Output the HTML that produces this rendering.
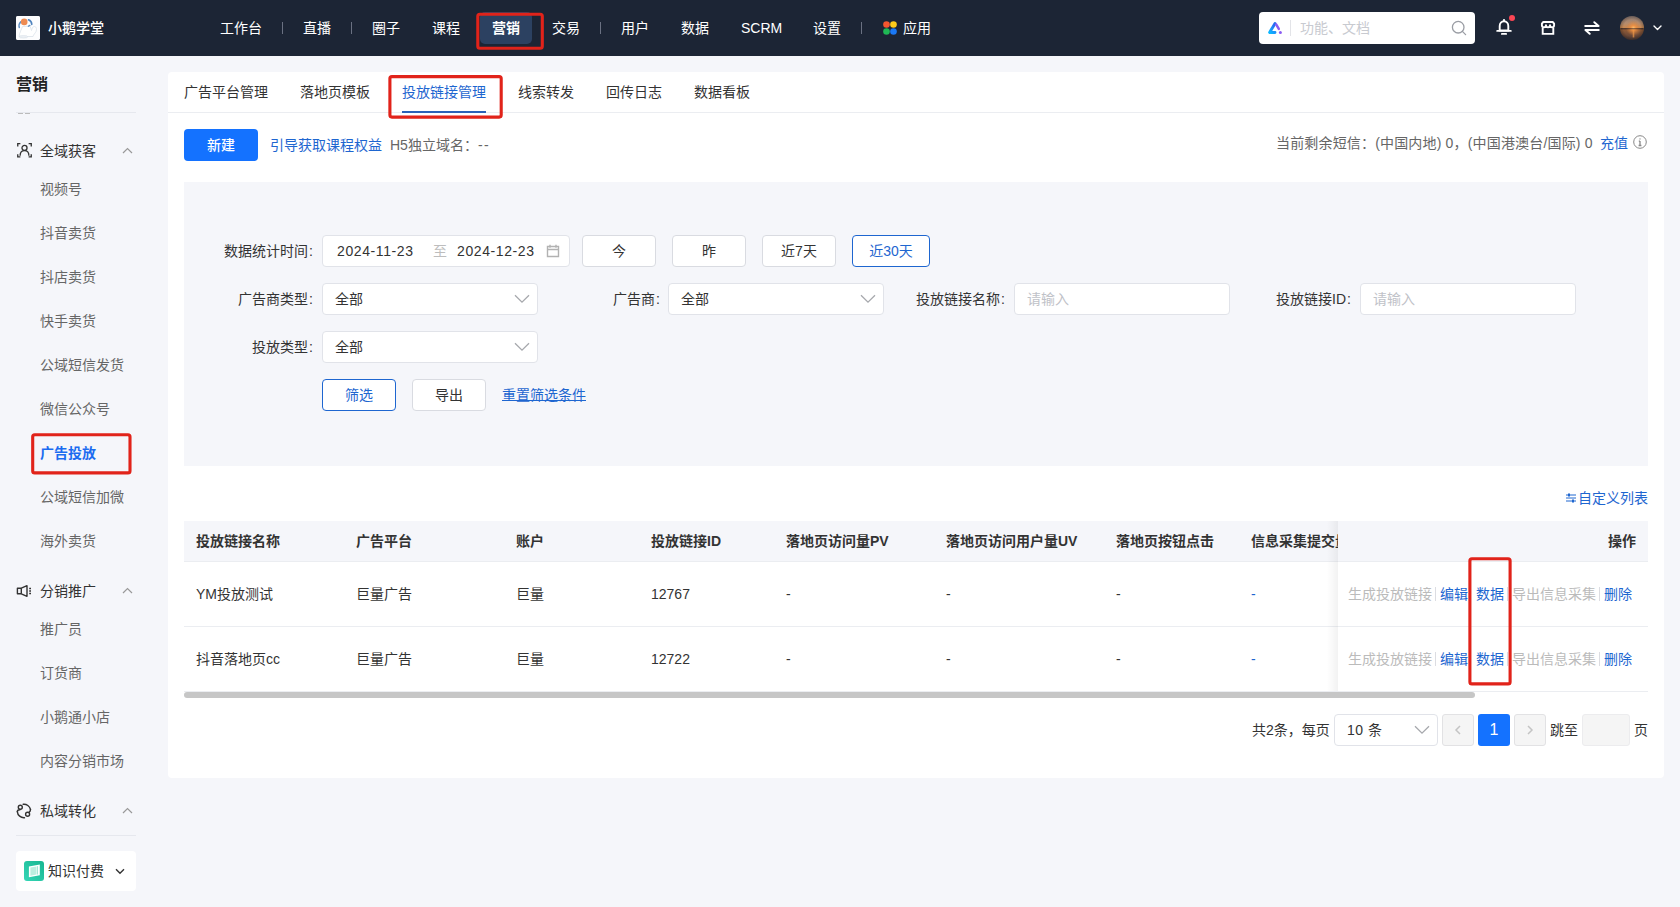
<!DOCTYPE html>
<html lang="zh-CN">
<head>
<meta charset="utf-8">
<title>投放链接管理</title>
<style>
*{box-sizing:border-box;margin:0;padding:0}
html,body{width:1680px;height:907px;overflow:hidden}
body{font-family:"Liberation Sans","Noto Sans CJK SC",sans-serif;font-size:14px;color:#333;background:#f5f6fa;position:relative}
.abs{position:absolute;white-space:nowrap}
/* top bar */
#top{position:absolute;left:0;top:0;width:1680px;height:56px;background:#1c2535}
#top .nav{position:absolute;top:0;height:56px;line-height:56px;color:#fff;font-size:14px;white-space:nowrap}
#top .sep{position:absolute;top:22px;width:1px;height:12px;background:#6a7182}
#logo{position:absolute;left:16px;top:16px;width:24px;height:24px;border-radius:2px;background:#f2f4f6;overflow:hidden}
/* sidebar */
#side{position:absolute;left:0;top:56px;width:168px;height:851px;background:#f5f6fa}
#side .it{position:absolute;left:40px;font-size:14px;color:#666;white-space:nowrap;line-height:20px}
#side .grp{position:absolute;left:40px;font-size:14px;color:#333;white-space:nowrap;line-height:20px}
/* main */
#main{position:absolute;left:168px;top:72px;width:1496px;height:706px;background:#fff;border-radius:4px}
.tab{position:absolute;top:82px;font-size:14px;line-height:20px;color:#333;white-space:nowrap}
.redbox{position:absolute;border:2px solid #f5222d;border-radius:3px}
.lbl{position:absolute;font-size:14px;line-height:20px;color:#333;white-space:nowrap;text-align:right}
.inp{position:absolute;height:32px;background:#fff;border:1px solid #e1e3e9;border-radius:4px;font-size:14px;line-height:30px;color:#333;white-space:nowrap}
.btn{position:absolute;height:32px;background:#fff;border:1px solid #d9dbe1;border-radius:4px;font-size:14px;line-height:30px;color:#333;text-align:center;white-space:nowrap}
.blue{color:#1e66d0 !important}
.th{position:absolute;top:531px;font-size:14px;line-height:20px;font-weight:bold;color:#333;white-space:nowrap}
.td{position:absolute;font-size:14px;line-height:20px;color:#333;white-space:nowrap}
</style>
</head>
<body>
<div id="top">
<div id="logo"><svg width="24" height="24" viewBox="0 0 24 24"><rect width="24" height="24" fill="#fdfdfe"/><path d="M6.500 10.500c-1 3-3 6-3.500 10h14c.5-2 2-3 3-5s.5-5-1.500-5-2.500 2-3 4l-1.500-4.500z" fill="#fff" stroke="#dfe5ec" stroke-width=".9"/><path d="M3.300 11.500c-.6-2 .2-4.500 1.500-5.800" fill="none" stroke="#5f8fc4" stroke-width="1.500" stroke-linecap="round"/><path d="M12.500 3.800c2 .8 3.200 2.600 3.300 4.600" fill="none" stroke="#4f83bd" stroke-width="1.600" stroke-linecap="round"/><path d="M12.300 10.300l1.600-.9" stroke="#5f8fc4" stroke-width="1.300" stroke-linecap="round"/><circle cx="8.200" cy="5.900" r="3.300" fill="#ee8b52"/><ellipse cx="7.500" cy="20.800" rx="4.200" ry="1.200" fill="#eef2f6" stroke="#d5dde6" stroke-width=".6"/></svg></div>
<div class="nav" style="left:48px;font-weight:500">小鹅学堂</div>
<div class="nav" style="left:220px">工作台</div><div class="sep" style="left:282px"></div>
<div class="nav" style="left:303px">直播</div><div class="sep" style="left:351px"></div>
<div class="nav" style="left:372px">圈子</div>
<div class="nav" style="left:432px">课程</div>
<div class="abs" style="left:480px;top:12px;width:52px;height:32px;background:#2c4161;border-radius:5px"></div>
<div class="nav" style="left:492px;font-weight:bold">营销</div>
<svg class="abs" style="left:475px;top:11px" width="71" height="41" viewBox="0 0 71 41"><rect x="2.80" y="3.30" width="64.50" height="34.00" rx="2" fill="none" stroke="#e1231a" stroke-width="3.1"/></svg>
<div class="nav" style="left:552px">交易</div><div class="sep" style="left:600px"></div>
<div class="nav" style="left:621px">用户</div>
<div class="nav" style="left:681px">数据</div>
<div class="nav" style="left:741px">SCRM</div>
<div class="nav" style="left:813px">设置</div><div class="sep" style="left:861px"></div>
<svg class="abs" style="left:883px;top:21px" width="14" height="14" viewBox="0 0 14 14"><circle cx="3.500" cy="3.500" r="3.300" fill="#f4562f"/><circle cx="10.500" cy="3.500" r="3.300" fill="#fccb1a"/><circle cx="3.500" cy="10.500" r="3.300" fill="#1fb855"/><circle cx="10.500" cy="10.500" r="3.300" fill="#1a78f5"/></svg>
<div class="nav" style="left:903px">应用</div>
<div class="abs" style="left:1259px;top:12px;width:216px;height:32px;background:#fff;border-radius:4px"></div>
<svg class="abs" style="left:1267px;top:21px" width="16" height="14" viewBox="0 0 16 14"><defs><linearGradient id="ag" x1="0" y1="1" x2=".6" y2="0"><stop offset="0" stop-color="#0cb8ff"/><stop offset="1" stop-color="#2a6af2"/></linearGradient></defs><path d="M8 2.400 2.600 11.500H8" fill="none" stroke="url(#ag)" stroke-width="2.900" stroke-linecap="round" stroke-linejoin="round"/><path d="M9.300 3.600l2.500 4.300" fill="none" stroke="#8b5cf2" stroke-width="2.500" stroke-linecap="round"/><circle cx="13.400" cy="11.500" r="1.500" fill="#8b5cf2"/></svg>
<div class="abs" style="left:1290px;top:20px;width:1px;height:16px;background:#e3e4e8"></div>
<div class="abs" style="left:1300px;top:0;line-height:56px;font-size:14px;color:#c8cad0">功能、文档</div>
<svg class="abs" style="left:1451px;top:20px" width="16" height="16" viewBox="0 0 16 16"><circle cx="7.2" cy="7.2" r="5.8" fill="none" stroke="#9a9da4" stroke-width="1.3"/><path d="M11.4 11.4 14.6 14.6" stroke="#9a9da4" stroke-width="1.3" stroke-linecap="round"/></svg>
<svg class="abs" style="left:1496px;top:19px" width="16" height="17" viewBox="0 0 16 17"><path d="M8 2.300c-2.500 0-4.300 1.900-4.300 4.600v4.600h8.600V6.900c0-2.700-1.800-4.600-4.300-4.600z" fill="none" stroke="#fff" stroke-width="1.900"/><path d="M1.200 11.900h13.600" stroke="#fff" stroke-width="1.900" stroke-linecap="round"/><path d="M5.800 14.900h4.400" stroke="#fff" stroke-width="1.700" stroke-linecap="round"/><path d="M8 .9v1.200" stroke="#fff" stroke-width="1.900" stroke-linecap="round"/></svg>
<div class="abs" style="left:1509px;top:15px;width:6px;height:6px;border-radius:3px;background:#fb4654"></div>
<svg class="abs" style="left:1540px;top:20px" width="16" height="16" viewBox="0 0 16 16"><path d="M2.700 7.800v6.100h10.600V7.800" fill="none" stroke="#fff" stroke-width="1.900"/><path d="M3.300 2h9.400l1.400 1.600v1.700a2.030 2.030 0 0 1-4.070 0 2.030 2.030 0 0 1-4.060 0 2.030 2.030 0 0 1-4.070 0V3.600z" fill="none" stroke="#fff" stroke-width="1.900" stroke-linejoin="round"/></svg>
<svg class="abs" style="left:1584px;top:21px" width="16" height="14" viewBox="0 0 16 14"><path d="M1.200 5h13.400L10.300 1.200" fill="none" stroke="#fff" stroke-width="1.900" stroke-linejoin="round" stroke-linecap="round"/><path d="M14.800 9H1.400l4.300 3.800" fill="none" stroke="#fff" stroke-width="1.900" stroke-linejoin="round" stroke-linecap="round"/></svg>
<svg class="abs" style="left:1620px;top:16px" width="24" height="24" viewBox="0 0 24 24"><defs><linearGradient id="av" x1="0" y1="0" x2="0" y2="1"><stop offset="0" stop-color="#8d7a74"/><stop offset=".3" stop-color="#b48c6e"/><stop offset=".5" stop-color="#c98850"/><stop offset=".53" stop-color="#4a342a"/><stop offset=".57" stop-color="#8e5a36"/><stop offset=".8" stop-color="#6e4a38"/><stop offset="1" stop-color="#4c3a36"/></linearGradient><radialGradient id="avg" cx=".56" cy=".5" r=".32"><stop offset="0" stop-color="#ffc070"/><stop offset=".35" stop-color="#f09040" stop-opacity=".85"/><stop offset="1" stop-color="#d08040" stop-opacity="0"/></radialGradient><radialGradient id="avv" cx=".5" cy=".5" r=".5"><stop offset=".7" stop-color="#000" stop-opacity="0"/><stop offset="1" stop-color="#000" stop-opacity=".25"/></radialGradient><clipPath id="avc"><circle cx="12" cy="12" r="12"/></clipPath></defs><g clip-path="url(#avc)"><rect width="24" height="24" fill="url(#av)"/><rect width="24" height="24" fill="url(#avg)"/><rect x="12.700" y="13.500" width="1.600" height="8" fill="#f09848" opacity=".7"/><rect x="1" y="12.300" width="22" height=".9" fill="#3a2a26" opacity=".8"/><rect width="24" height="24" fill="url(#avv)"/></g></svg>
<svg class="abs" style="left:1653px;top:25px" width="9" height="6" viewBox="0 0 9 6"><path d="M1 1l3.500 3.500L8 1" fill="none" stroke="#fff" stroke-width="1.400" stroke-linecap="round" stroke-linejoin="round"/></svg>
</div>
<div id="side">
<div class="abs" style="left:16px;top:17px;font-size:16px;line-height:24px;font-weight:bold;color:#222">营销</div>
<div class="abs" style="left:16px;top:56px;width:120px;height:1px;background:#e6e8ee"></div>
<div class="abs" style="left:18px;top:57px;width:5px;height:1px;background:#bbb"></div><div class="abs" style="left:25px;top:57px;width:5px;height:1px;background:#bbb"></div>
<div class="it" style="top:123px">视频号</div>
<div class="it" style="top:167px">抖音卖货</div>
<div class="it" style="top:211px">抖店卖货</div>
<div class="it" style="top:255px">快手卖货</div>
<div class="it" style="top:299px">公域短信发货</div>
<div class="it" style="top:343px">微信公众号</div>
<div class="it" style="top:431px">公域短信加微</div>
<div class="it" style="top:475px">海外卖货</div>
<div class="it" style="top:563px">推广员</div>
<div class="it" style="top:607px">订货商</div>
<div class="it" style="top:651px">小鹅通小店</div>
<div class="it" style="top:695px">内容分销市场</div>
<div class="it" style="top:387px;color:#1b6cf0;font-weight:bold">广告投放</div>
<svg class="abs" style="left:30px;top:376px" width="104" height="45" viewBox="0 0 104 45"><rect x="2.70" y="2.70" width="97.30" height="38.20" rx="2" fill="none" stroke="#e1231a" stroke-width="3.1"/></svg>
<svg class="abs" style="left:16.500px;top:87.400px" width="15" height="14.600" viewBox="0 0 16 16" preserveAspectRatio="none"><g fill="none" stroke="#333" stroke-width="1.400"><path d="M.8 3.800V.8h2.800"/><path d="M12.400.8h2.800v3"/><path d="M.8 12.200v3h2.800"/><path d="M15.200 12.200v3h-2.800"/><circle cx="8" cy="5.400" r="2.700"/><path d="M3.300 14c0-3.400 2-5.600 4.700-5.600s4.700 2.200 4.700 5.600"/></g></svg>
<div class="grp" style="top:85px">全域获客</div><svg class="abs" style="left:122px;top:91px" width="11" height="7" viewBox="0 0 11 7"><path d="M1 6l4.500-4.500L10 6" fill="none" stroke="#999" stroke-width="1.200"/></svg>
<svg class="abs" style="left:16px;top:528px" width="16" height="14" viewBox="0 0 16 14"><g fill="none" stroke="#333" stroke-width="1.400"><path d="M1.400 4.200h3.900L11 1.700v10.600L5.300 9.800H1.400z" stroke-linejoin="round"/><path d="M5.300 4.200v5.600"/><path d="M13.200 4.500h1.800M13.200 7h1.800M13.200 9.500h1.800"/></g></svg>
<div class="grp" style="top:525px">分销推广</div><svg class="abs" style="left:122px;top:531px" width="11" height="7" viewBox="0 0 11 7"><path d="M1 6l4.500-4.500L10 6" fill="none" stroke="#999" stroke-width="1.200"/></svg>
<svg class="abs" style="left:16px;top:747px" width="16" height="16" viewBox="0 0 16 16"><g fill="none" stroke="#333" stroke-width="1.400" stroke-linecap="round"><path d="M7.200 1.300A6.700 6.700 0 0 1 14.500 6.500"/><path d="M8.500 14.700A6.700 6.700 0 0 1 1.300 8.600"/><path d="M1.300 8.600c.2-1.400 1.400-1.800 2.700-1.800"/><path d="M14.500 6.500c0 1.400-.6 2.200-1.500 2.800"/><circle cx="4.300" cy="4.300" r="2"/><circle cx="11.600" cy="11.200" r="2"/></g></svg>
<div class="grp" style="top:745px">私域转化</div><svg class="abs" style="left:122px;top:751px" width="11" height="7" viewBox="0 0 11 7"><path d="M1 6l4.500-4.500L10 6" fill="none" stroke="#999" stroke-width="1.200"/></svg>
<div class="abs" style="left:16px;top:779px;width:120px;height:1px;background:#e6e8ee"></div>
<div class="abs" style="left:16px;top:795px;width:120px;height:40px;background:#fff;border-radius:4px"></div>
<svg class="abs" style="left:24px;top:805px" width="20" height="20" viewBox="0 0 20 20"><defs><linearGradient id="kg" x1="0" y1="1" x2="1" y2="0"><stop offset="0" stop-color="#35d6b6"/><stop offset="1" stop-color="#17b590"/></linearGradient></defs><rect width="20" height="20" rx="3" fill="url(#kg)"/><path d="M4.900 5.400 15.800 3.400V14.200L4.900 16.200z" fill="#fff"/><path d="M6.400 6.500 12.400 5.400V13.600L6.400 14.700z" fill="#bdeee0"/><path d="M13.400 5.200v8.300" stroke="#7fdcc4" stroke-width=".8"/></svg>
<div class="abs" style="left:48px;top:805px;font-size:14px;line-height:20px;color:#333">知识付费</div>
<svg class="abs" style="left:115px;top:812px" width="10" height="7" viewBox="0 0 10 7"><path d="M1 1.200l4 4 4-4" fill="none" stroke="#333" stroke-width="1.400"/></svg>
</div>
<div id="main"></div>
<div class="tab" style="left:184px">广告平台管理</div>
<div class="tab" style="left:300px">落地页模板</div>
<div class="tab blue" style="left:402px">投放链接管理</div>
<div class="tab" style="left:518px">线索转发</div>
<div class="tab" style="left:606px">回传日志</div>
<div class="tab" style="left:694px">数据看板</div>
<div class="abs" style="left:168px;top:112px;width:1496px;height:1px;background:#ebedf1"></div>
<div class="abs" style="left:402px;top:111px;width:84px;height:2px;background:#2b61b8"></div>
<svg class="abs" style="left:387px;top:74px" width="118" height="47" viewBox="0 0 118 47"><rect x="2.90" y="2.60" width="111.30" height="40.50" rx="2" fill="none" stroke="#e1231a" stroke-width="3.1"/></svg>
<div class="abs" style="left:184px;top:129px;width:74px;height:32px;background:#1472ff;border-radius:4px;color:#fff;text-align:center;line-height:32px;font-size:14px;font-weight:500">新建</div>
<div class="abs blue" style="left:270px;top:135px;line-height:20px">引导获取课程权益</div>
<div class="abs" style="left:390px;top:135px;line-height:20px;color:#666">H5独立域名：<span style="letter-spacing:1.5px">--</span></div>
<div class="abs" style="left:1276px;top:133px;line-height:20px;color:#666;letter-spacing:.17px">当前剩余短信：(中国内地) 0，(中国港澳台/国际) 0</div>
<div class="abs blue" style="left:1600px;top:133px;line-height:20px">充值</div>
<svg class="abs" style="left:1633px;top:135px" width="14" height="14" viewBox="0 0 14 14"><circle cx="7" cy="7" r="6.300" fill="none" stroke="#888" stroke-width="1"/><path d="M7 6v4.500M5.800 6.200H7M5.600 10.500h2.800" stroke="#888" stroke-width="1.300" fill="none"/><circle cx="7" cy="3.900" r=".7" fill="#888"/></svg>
<div class="abs" style="left:184px;top:182px;width:1464px;height:284px;background:#f5f6fa"></div>
<div class="lbl" style="right:1367px;top:241px">数据统计时间<span style="margin-left:1px">:</span></div>
<div class="inp" style="left:322px;top:235px;width:248px"></div>
<div class="abs" style="left:337px;top:241px;line-height:20px;color:#333;letter-spacing:.6px">2024-11-23</div><div class="abs" style="left:433px;top:241px;line-height:20px;color:#bdbdbd;font-size:14px">至</div><div class="abs" style="left:457px;top:241px;line-height:20px;color:#333;letter-spacing:.6px">2024-12-23</div>
<svg class="abs" style="left:546px;top:244px" width="14" height="14" viewBox="0 0 14 14"><path d="M1.500 2.500h11v10h-11zM1.500 5.500h11M4 .8v3M10 .8v3" fill="none" stroke="#b2b2b2" stroke-width="1.400"/></svg>
<div class="btn" style="left:582px;top:235px;width:74px">今</div>
<div class="btn" style="left:672px;top:235px;width:74px">昨</div>
<div class="btn" style="left:762px;top:235px;width:74px">近7天</div>
<div class="btn" style="left:852px;top:235px;width:78px;border-color:#1e66d0;color:#1e66d0">近30天</div>
<div class="lbl" style="right:1367px;top:289px">广告商类型<span style="margin-left:1px">:</span></div>
<div class="inp" style="left:322px;top:283px;width:216px;padding-left:12px">全部</div>
<svg class="abs" style="left:514px;top:294px" width="16" height="10" viewBox="0 0 16 10"><path d="M1 1.200l7 7 7-7" fill="none" stroke="#a6a8ad" stroke-width="1.300"/></svg>
<div class="lbl" style="right:1020px;top:289px">广告商<span style="margin-left:1px">:</span></div>
<div class="inp" style="left:668px;top:283px;width:216px;padding-left:12px">全部</div>
<svg class="abs" style="left:860px;top:294px" width="16" height="10" viewBox="0 0 16 10"><path d="M1 1.200l7 7 7-7" fill="none" stroke="#a6a8ad" stroke-width="1.300"/></svg>
<div class="lbl" style="right:675px;top:289px">投放链接名称<span style="margin-left:1px">:</span></div>
<div class="inp" style="left:1014px;top:283px;width:216px;padding-left:12px;color:#bfc2c8">请输入</div>
<div class="lbl" style="right:329px;top:289px">投放链接ID<span style="margin-left:1px">:</span></div>
<div class="inp" style="left:1360px;top:283px;width:216px;padding-left:12px;color:#bfc2c8">请输入</div>
<div class="lbl" style="right:1367px;top:337px">投放类型<span style="margin-left:1px">:</span></div>
<div class="inp" style="left:322px;top:331px;width:216px;padding-left:12px">全部</div>
<svg class="abs" style="left:514px;top:342px" width="16" height="10" viewBox="0 0 16 10"><path d="M1 1.200l7 7 7-7" fill="none" stroke="#a6a8ad" stroke-width="1.300"/></svg>
<div class="btn" style="left:322px;top:379px;width:74px;border-color:#1e66d0;color:#1e66d0">筛选</div>
<div class="btn" style="left:412px;top:379px;width:74px">导出</div>
<div class="abs blue" style="left:502px;top:385px;line-height:20px">重置筛选条件</div><div class="abs" style="left:502px;top:400px;width:84px;height:1px;background:#1e66d0"></div>
<svg class="abs" style="left:1566px;top:493px" width="10" height="10" viewBox="0 0 10 10"><path d="M0 2h10M0 5h10M0 8h10" stroke="#1e66d0" stroke-width="1"/><rect x="2" y=".5" width="2" height="3" fill="#1e66d0"/><rect x="6" y="6.500" width="2" height="3" fill="#1e66d0"/></svg>
<div class="abs blue" style="left:1578px;top:488px;line-height:20px">自定义列表</div>
<div class="abs" style="left:184px;top:521px;width:1464px;height:40px;background:#f5f6fa"></div>
<div class="th" style="left:196px">投放链接名称</div>
<div class="th" style="left:356px">广告平台</div>
<div class="th" style="left:516px">账户</div>
<div class="th" style="left:651px">投放链接ID</div>
<div class="th" style="left:786px">落地页访问量PV</div>
<div class="th" style="left:946px">落地页访问用户量UV</div>
<div class="th" style="left:1116px">落地页按钮点击</div>
<div class="th" style="left:1251px">信息采集提交量</div>
<div class="td" style="left:196px;top:584px">YM投放测试</div>
<div class="td" style="left:356px;top:584px">巨量广告</div>
<div class="td" style="left:516px;top:584px">巨量</div>
<div class="td" style="left:651px;top:584px">12767</div>
<div class="td" style="left:786px;top:584px">-</div>
<div class="td" style="left:946px;top:584px">-</div>
<div class="td" style="left:1116px;top:584px">-</div>
<div class="td blue" style="left:1251px;top:584px">-</div>
<div class="td" style="left:196px;top:649px">抖音落地页cc</div>
<div class="td" style="left:356px;top:649px">巨量广告</div>
<div class="td" style="left:516px;top:649px">巨量</div>
<div class="td" style="left:651px;top:649px">12722</div>
<div class="td" style="left:786px;top:649px">-</div>
<div class="td" style="left:946px;top:649px">-</div>
<div class="td" style="left:1116px;top:649px">-</div>
<div class="td blue" style="left:1251px;top:649px">-</div>
<div class="abs" style="left:184px;top:561px;width:1464px;height:1px;background:#ebedf1"></div>
<div class="abs" style="left:184px;top:626px;width:1464px;height:1px;background:#ebedf1"></div>
<div class="abs" style="left:184px;top:691px;width:1464px;height:1px;background:#ebedf1"></div>
<div class="abs" style="left:1327px;top:521px;width:11px;height:170px;background:linear-gradient(to right,rgba(0,0,0,0),rgba(0,0,0,.05))"></div>
<div class="abs" style="left:1338px;top:521px;width:310px;height:40px;background:#f5f6fa"></div>
<div class="abs" style="left:1338px;top:562px;width:310px;height:64px;background:#fff"></div>
<div class="abs" style="left:1338px;top:627px;width:310px;height:64px;background:#fff"></div>
<div class="th" style="left:1608px">操作</div>
<div class="td" style="left:1348px;top:584px;color:#bbb">生成投放链接</div><div class="td blue" style="left:1440px;top:584px">编辑</div><div class="td blue" style="left:1476px;top:584px">数据</div><div class="td" style="left:1512px;top:584px;color:#bbb">导出信息采集</div><div class="td blue" style="left:1604px;top:584px">删除</div><div class="abs" style="left:1435px;top:587px;width:1px;height:14px;background:#dcdde2"></div><div class="abs" style="left:1470px;top:587px;width:1px;height:14px;background:#dcdde2"></div><div class="abs" style="left:1507px;top:587px;width:1px;height:14px;background:#dcdde2"></div><div class="abs" style="left:1599px;top:587px;width:1px;height:14px;background:#dcdde2"></div>
<div class="td" style="left:1348px;top:649px;color:#bbb">生成投放链接</div><div class="td blue" style="left:1440px;top:649px">编辑</div><div class="td blue" style="left:1476px;top:649px">数据</div><div class="td" style="left:1512px;top:649px;color:#bbb">导出信息采集</div><div class="td blue" style="left:1604px;top:649px">删除</div><div class="abs" style="left:1435px;top:652px;width:1px;height:14px;background:#dcdde2"></div><div class="abs" style="left:1470px;top:652px;width:1px;height:14px;background:#dcdde2"></div><div class="abs" style="left:1507px;top:652px;width:1px;height:14px;background:#dcdde2"></div><div class="abs" style="left:1599px;top:652px;width:1px;height:14px;background:#dcdde2"></div>
<svg class="abs" style="left:1467px;top:556px" width="47" height="132" viewBox="0 0 47 132"><rect x="2.90" y="2.80" width="40.20" height="125.10" rx="2" fill="none" stroke="#e1231a" stroke-width="3.1"/></svg>
<div class="abs" style="left:184px;top:692px;width:1291px;height:6px;background:#c6c6c6;border-radius:3px"></div>
<div class="abs" style="left:1252px;top:720px;line-height:20px;color:#333">共2条，每页</div>
<div class="inp" style="left:1334px;top:714px;width:104px;padding-left:12px;letter-spacing:.5px">10 条</div>
<svg class="abs" style="left:1414px;top:725px" width="16" height="10" viewBox="0 0 16 10"><path d="M1 1.200l7 7 7-7" fill="none" stroke="#a6a8ad" stroke-width="1.300"/></svg>
<div class="abs" style="left:1442px;top:714px;width:32px;height:32px;background:#f5f5f5;border:1px solid #e2e2e4;border-radius:3px"></div><svg class="abs" style="left:1454px;top:725px" width="8" height="10" viewBox="0 0 8 10"><path d="M6 1 2 5l4 4" fill="none" stroke="#c4c4c4" stroke-width="1.500"/></svg>
<div class="abs" style="left:1478px;top:714px;width:32px;height:32px;background:#1472ff;border-radius:3px;color:#fff;text-align:center;line-height:32px;font-size:16px">1</div>
<div class="abs" style="left:1514px;top:714px;width:32px;height:32px;background:#f5f5f5;border:1px solid #e2e2e4;border-radius:3px"></div><svg class="abs" style="left:1526px;top:725px" width="8" height="10" viewBox="0 0 8 10"><path d="M2 1l4 4-4 4" fill="none" stroke="#c4c4c4" stroke-width="1.500"/></svg>
<div class="abs" style="left:1550px;top:720px;line-height:20px">跳至</div>
<div class="abs" style="left:1582px;top:714px;width:48px;height:32px;background:#f5f5f5;border:1px solid #ececee;border-radius:3px"></div>
<div class="abs" style="left:1634px;top:720px;line-height:20px">页</div>
</body>
</html>
